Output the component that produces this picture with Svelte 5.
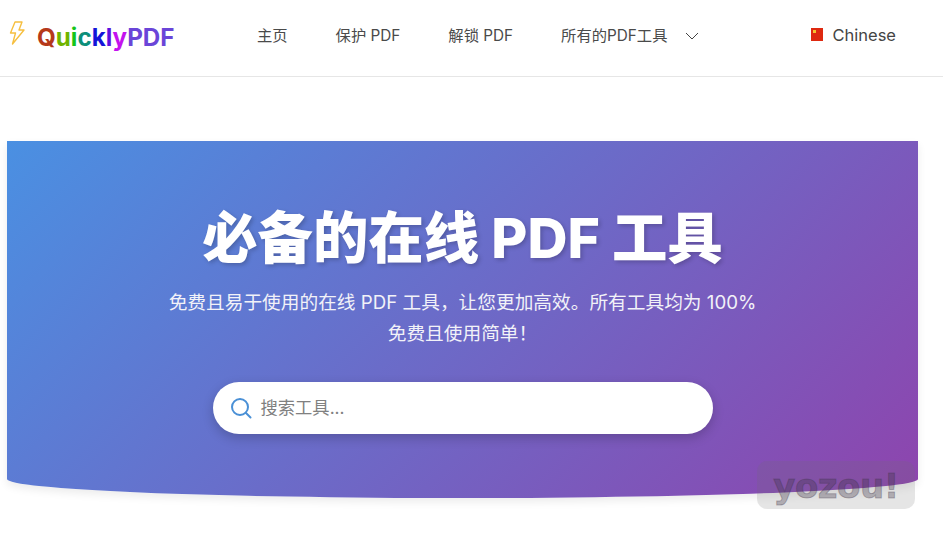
<script>
	const links = [
		{ label: '主页' },
		{ label: '保护 PDF' },
		{ label: '解锁 PDF' },
		{ label: '所有的PDF工具', caret: true }
	];
	const logoLetters = [
		['Q', '#b5391a'],
		['u', '#6fb400'],
		['i', '#16c41a'],
		['c', '#0c8f7a'],
		['k', '#1414d8'],
		['l', '#5a10e0'],
		['y', '#c412ee']
	];
</script>

<div class="page">
	<header class="topbar">
		<a class="brand" href="#top">
			<svg class="bolt" width="18" height="26" viewBox="0 0 18 26" fill="none" stroke="#f6bf3f" stroke-width="1.4" stroke-linejoin="round">
				<path d="M7 2h7l-3 8h5L4.500 24 7.500 13H2.500z" />
			</svg>
			<span class="wordmark">
				{#each logoLetters as [ch, color]}<span style="color: {color}">{ch}</span>{/each}<span class="pdf">PDF</span>
			</span>
		</a>

		<nav class="links">
			{#each links as link}
				<a href="#top" class="link">
					{link.label}
					{#if link.caret}
						<svg class="caret" width="14" height="8" viewBox="0 0 14 8" fill="none" stroke="#444" stroke-width="1">
							<path d="M1 1l6 6 6-6" />
						</svg>
					{/if}
				</a>
			{/each}
		</nav>

		<div class="lang">
			<svg width="12" height="13" viewBox="0 0 12 13">
				<rect width="12" height="13" fill="#de2910" />
				<rect x="2" y="2" width="3" height="3" fill="#f4c430" />
			</svg>
			<span>Chinese</span>
		</div>
	</header>

	<section class="hero">
		<h1>必备的在线 PDF 工具</h1>
		<p>免费且易于使用的在线 PDF 工具，让您更加高效。所有工具均为 100%<br />免费且使用简单！</p>
		<div class="search">
			<svg width="22" height="22" viewBox="0 0 22 22" fill="none" stroke="#4a90d6" stroke-width="2" stroke-linecap="round">
				<circle cx="10" cy="10" r="8" />
				<path d="M16 16l4.500 4.500" />
			</svg>
			<span class="placeholder">搜索工具...</span>
		</div>
	</section>

	<div class="watermark">yozou!</div>
</div>

<style>
	:global(body) {
		background: #fff;
		font-family: Inter, "Noto Sans CJK SC", sans-serif;
	}
	.page {
		position: relative;
		height: 537px;
		overflow: hidden;
	}
	.topbar {
		display: flex;
		align-items: center;
		height: 76px;
		border-bottom: 1px solid #e6e6e6;
		padding: 0 47px 0 8px;
	}
	.brand {
		display: flex;
		align-items: center;
		gap: 11px;
		width: 249px;
		text-decoration: none;
	}
	.bolt {
		margin-top: -10px;
	}
	.wordmark {
		margin-top: -2px;
		font-size: 24.2px;
		font-weight: 700;
	}
	.pdf {
		color: #6a45d8;
	}
	.links {
		display: flex;
		align-items: center;
		gap: 48px;
		flex: 1;
		margin-top: -9px;
	}
	.link {
		display: flex;
		align-items: center;
		font-size: 15.3px;
		color: #4a4a4a;
		text-decoration: none;
	}
	.caret {
		margin-left: 18px;
		margin-top: 5px;
	}
	.lang {
		display: flex;
		align-items: center;
		gap: 9px;
		margin-top: -7px;
		font-size: 16.5px;
		color: #444;
	}
	.hero {
		display: flex;
		flex-direction: column;
		align-items: center;
		box-sizing: border-box;
		width: 911px;
		height: 357px;
		margin: 64px 0 0 7px;
		padding-top: 61px;
		background: linear-gradient(135deg, #4a90e2, #8e44ad);
		border-radius: 0 0 50% 50% / 0 0 19px 19px;
		box-shadow: 0 4px 8px rgba(0, 0, 0, 0.08);
		color: #fff;
		text-align: center;
	}
	h1 {
		margin: 0 0 13px;
		font-size: 55.4px;
		line-height: 72px;
		font-weight: 800;
		text-shadow: 2px 2px 4px rgba(0, 0, 0, 0.2);
	}
	p {
		margin: 0;
		font-size: 18.7px;
		line-height: 31px;
		color: #f2f2f8;
	}
	.search {
		display: flex;
		align-items: center;
		gap: 9px;
		box-sizing: border-box;
		width: 500px;
		height: 52px;
		margin-top: 33px;
		padding-left: 17px;
		background: #fff;
		border-radius: 26px;
		box-shadow: 0 4px 12px rgba(0, 0, 0, 0.2);
	}
	.placeholder {
		margin-top: -3px;
		font-size: 17.3px;
		color: #808080;
	}
	.watermark {
		position: absolute;
		left: 757px;
		top: 461px;
		width: 158px;
		height: 48px;
		border-radius: 10px;
		background: rgba(110, 110, 110, 0.18);
		color: rgba(60, 50, 70, 0.32);
		font-family: "DejaVu Sans", sans-serif;
		font-size: 34px;
		font-weight: 700;
		line-height: 50px;
		letter-spacing: -0.5px;
		text-align: center;
		-webkit-text-stroke: 1px rgba(60, 50, 70, 0.32);
	}
</style>
